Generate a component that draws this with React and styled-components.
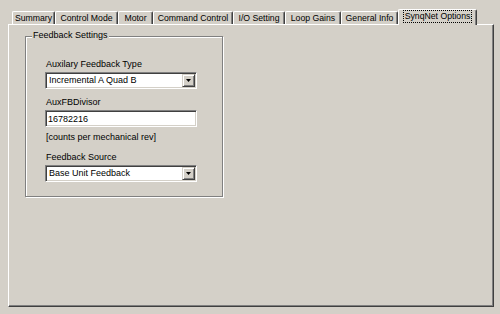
import React from "react";
import styled, { createGlobalStyle } from "styled-components";

const Global = createGlobalStyle`
  html, body {
    margin: 0;
    padding: 0;
    background: #d4d0c8;
    width: 500px;
    height: 314px;
    overflow: hidden;
  }
  * { box-sizing: border-box; }
`;

const FONT = `"Liberation Sans", Arial, sans-serif`;

const Page = styled.div`
  width: 500px;
  height: 314px;
  padding: 9px 6px 0 8px;
  font-family: ${FONT};
  font-size: 9px;
  color: #000;
`;

const TabRow = styled.div`
  display: flex;
  align-items: flex-end;
  height: 15px;
  padding-left: 4px;
  position: relative;
  z-index: 1;
`;

const Tab = styled.div`
  width: ${(p) => p.$w}px;
  height: ${(p) => (p.$active ? 16 : 13)}px;
  margin-bottom: ${(p) => (p.$active ? -1 : 0)}px;
  background: #d4d0c8;
  border-top: 1px solid #fff;
  border-left: 1px solid #fff;
  border-right: 1px solid #404040;
  box-shadow: inset -1px 0 0 #808080;
  border-top-left-radius: 2px;
  border-top-right-radius: 2px;
  display: flex;
  align-items: ${(p) => (p.$active ? "flex-start" : "center")};
  padding-top: ${(p) => (p.$active ? 1 : 0)}px;
  justify-content: center;
  white-space: nowrap;
  line-height: 11px;
  flex-shrink: 0;
  font-size: 8.7px;
`;

const Focus = styled.span`
  outline: 1px dotted #000;
  outline-offset: 0;
  padding: 0 1px;
`;

const Panel = styled.div`
  height: 283px;
  border-top: 1px solid #fff;
  border-left: 1px solid #fff;
  border-right: 1px solid #404040;
  border-bottom: 1px solid #404040;
  box-shadow: inset -1px -1px 0 #808080;
  padding: 11px 0 0 16px;
`;

const Group = styled.div`
  position: relative;
  width: 198px;
  height: 161px;
  border: 1px solid #808080;
  box-shadow: inset 1px 1px 0 #fff, 1px 1px 0 #fff;
  padding: 22px 0 0 19px;
  display: flex;
  flex-direction: column;
`;

const Legend = styled.span`
  position: absolute;
  top: -7px;
  left: 6px;
  padding: 0 1px;
  background: #d4d0c8;
  line-height: 11px;
  white-space: nowrap;
`;

const Label = styled.div`
  height: 11px;
  line-height: 11px;
  padding-left: 1px;
  margin-top: ${(p) => p.$mt || 0}px;
  white-space: nowrap;
`;

const Sunken = `
  width: 152px;
  height: 17px;
  background: #fff;
  border: 1px solid;
  border-color: #808080 #fff #fff #808080;
  box-shadow: inset 1px 1px 0 #404040, inset -1px -1px 0 #d4d0c8;
`;

const Combo = styled.div`
  ${Sunken}
  margin-top: 2px;
  display: flex;
  align-items: center;
  padding: 1px;
`;

const ComboValue = styled.span`
  flex: 1;
  padding-left: 2px;
  line-height: 13px;
  white-space: nowrap;
  overflow: hidden;
`;

const ArrowButton = styled.span`
  width: 13px;
  height: 13px;
  background: #d4d0c8;
  border: 1px solid;
  border-color: #d4d0c8 #404040 #404040 #d4d0c8;
  box-shadow: inset 1px 1px 0 #fff, inset -1px -1px 0 #808080;
  display: flex;
  align-items: center;
  justify-content: center;
`;

const Field = styled.input`
  ${Sunken}
  margin-top: 2px;
  padding: 0 0 0 2px;
  font-family: ${FONT};
  font-size: 9px;
  color: #000;
  outline: none;
`;

function ComboBox({ value }) {
  return (
    <Combo>
      <ComboValue>{value}</ComboValue>
      <ArrowButton>
        <svg width="5" height="3" viewBox="0 0 5 3">
          <path d="M0 0H5L2.5 3Z" fill="#000" />
        </svg>
      </ArrowButton>
    </Combo>
  );
}

const tabs = [
  { t: "Summary", w: 43 },
  { t: "Control Mode", w: 63 },
  { t: "Motor", w: 35 },
  { t: "Command Control", w: 80 },
  { t: "I/O Setting", w: 52 },
  { t: "Loop Gains", w: 56 },
  { t: "General Info", w: 57 },
  { t: "SynqNet Options", w: 79, active: true },
];

export default function App() {
  return (
    <>
      <Global />
      <Page>
        <TabRow>
          {tabs.map((tb) => (
            <Tab key={tb.t} $w={tb.w} $active={tb.active}>
              {tb.active ? <Focus>{tb.t}</Focus> : tb.t}
            </Tab>
          ))}
        </TabRow>
        <Panel>
          <Group>
            <Legend>Feedback Settings</Legend>
            <Label>Auxilary Feedback Type</Label>
            <ComboBox value="Incremental A Quad B" />
            <Label $mt={8}>AuxFBDivisor</Label>
            <Field readOnly value="16782216" />
            <Label $mt={5}>[counts per mechanical rev]</Label>
            <Label $mt={9}>Feedback Source</Label>
            <ComboBox value="Base Unit Feedback" />
          </Group>
        </Panel>
      </Page>
    </>
  );
}
